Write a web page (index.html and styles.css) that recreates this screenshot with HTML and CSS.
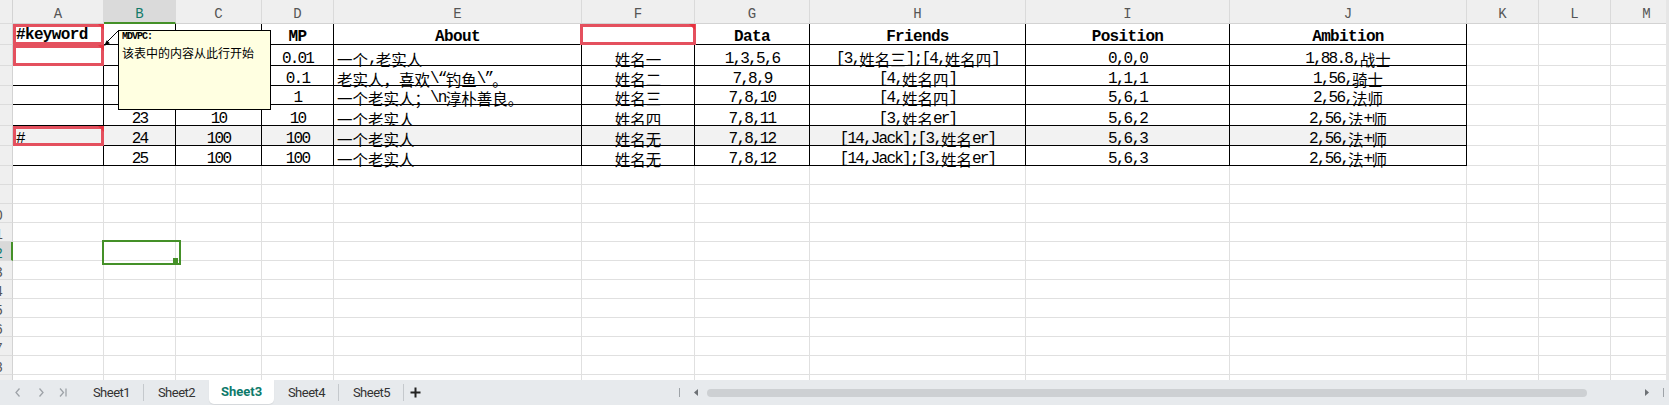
FILE: index.html
```html
<!DOCTYPE html>
<html lang="zh-CN">
<head>
<meta charset="utf-8">
<title>Sheet3</title>
<link rel="stylesheet" href="styles.css">
</head>
<body>
<div class="app">
  <div class="main">
    <div class="sheet">
      <div class="row hdr">
        <div class="rh"></div>
        <div class="ch">A</div><div class="ch sel">B</div><div class="ch">C</div><div class="ch">D</div><div class="ch">E</div><div class="ch">F</div><div class="ch">G</div><div class="ch">H</div><div class="ch">I</div><div class="ch">J</div><div class="ch">K</div><div class="ch">L</div><div class="ch">M</div>
      </div>

      <div class="row h21">
        <div class="rh"></div>
        <div class="c t b l hl cm kw">#keyword</div>
        <div class="c t b"></div>
        <div class="c t b"></div>
        <div class="c t b">MP</div>
        <div class="c t b">About</div>
        <div class="c t hl hlf cm"></div>
        <div class="c t b">Data</div>
        <div class="c t b">Friends</div>
        <div class="c t b">Position</div>
        <div class="c t b">Ambition</div>
        <div class="c"></div><div class="c"></div><div class="c"></div>
      </div>

      <div class="row h21">
        <div class="rh"></div>
        <div class="c t hl cm"></div>
        <div class="c t"></div>
        <div class="c t"></div>
        <div class="c t">0.01</div>
        <div class="c t l"><span class="z">一个</span>,<span class="z">老实人</span></div>
        <div class="c t"><span class="z">姓名一</span></div>
        <div class="c t">1,3,5,6</div>
        <div class="c t">[3,<span class="z">姓名三</span>];[4,<span class="z">姓名四</span>]</div>
        <div class="c t">0,0,0</div>
        <div class="c t">1,88.8,<span class="z">战士</span></div>
        <div class="c"></div><div class="c"></div><div class="c"></div>
      </div>

      <div class="row h20">
        <div class="rh"></div>
        <div class="c t"></div>
        <div class="c t"></div>
        <div class="c t"></div>
        <div class="c t">0.1</div>
        <div class="c t l"><span class="z">老实人，喜欢</span>\“<span class="z">钓鱼</span>\”<span class="z">。</span></div>
        <div class="c t"><span class="z">姓名二</span></div>
        <div class="c t">7,8,9</div>
        <div class="c t">[4,<span class="z">姓名四</span>]</div>
        <div class="c t">1,1,1</div>
        <div class="c t">1,56,<span class="z">骑士</span></div>
        <div class="c"></div><div class="c"></div><div class="c"></div>
      </div>

      <div class="row">
        <div class="rh"></div>
        <div class="c t"></div>
        <div class="c t"></div>
        <div class="c t"></div>
        <div class="c t">1</div>
        <div class="c t l"><span class="z">一个老实人；</span>\n<span class="z">淳朴善良。</span></div>
        <div class="c t"><span class="z">姓名三</span></div>
        <div class="c t">7,8,10</div>
        <div class="c t">[4,<span class="z">姓名四</span>]</div>
        <div class="c t">5,6,1</div>
        <div class="c t">2,56,<span class="z">法师</span></div>
        <div class="c"></div><div class="c"></div><div class="c"></div>
      </div>

      <div class="row h21">
        <div class="rh"></div>
        <div class="c t"></div>
        <div class="c t">23</div>
        <div class="c t">10</div>
        <div class="c t">10</div>
        <div class="c t l"><span class="z">一个老实人</span></div>
        <div class="c t"><span class="z">姓名四</span></div>
        <div class="c t">7,8,11</div>
        <div class="c t">[3,<span class="z">姓名</span>er]</div>
        <div class="c t">5,6,2</div>
        <div class="c t">2,56,<span class="z">法</span>+<span class="z">师</span></div>
        <div class="c"></div><div class="c"></div><div class="c"></div>
      </div>

      <div class="row h20">
        <div class="rh"></div>
        <div class="c t g l hl cm">#</div>
        <div class="c t g">24</div>
        <div class="c t g">100</div>
        <div class="c t g">100</div>
        <div class="c t g l"><span class="z">一个老实人</span></div>
        <div class="c t g"><span class="z">姓名无</span></div>
        <div class="c t g">7,8,12</div>
        <div class="c t g">[14,Jack];[3,<span class="z">姓名</span>er]</div>
        <div class="c t g">5,6,3</div>
        <div class="c t g">2,56,<span class="z">法</span>+<span class="z">师</span></div>
        <div class="c"></div><div class="c"></div><div class="c"></div>
      </div>

      <div class="row h20">
        <div class="rh"></div>
        <div class="c t"></div>
        <div class="c t">25</div>
        <div class="c t">100</div>
        <div class="c t">100</div>
        <div class="c t l"><span class="z">一个老实人</span></div>
        <div class="c t"><span class="z">姓名无</span></div>
        <div class="c t">7,8,12</div>
        <div class="c t">[14,Jack];[3,<span class="z">姓名</span>er]</div>
        <div class="c t">5,6,3</div>
        <div class="c t">2,56,<span class="z">法</span>+<span class="z">师</span></div>
        <div class="c"></div><div class="c"></div><div class="c"></div>
      </div>

      <div class="row"><div class="rh"></div><div class="c"></div><div class="c"></div><div class="c"></div><div class="c"></div><div class="c"></div><div class="c"></div><div class="c"></div><div class="c"></div><div class="c"></div><div class="c"></div><div class="c"></div><div class="c"></div><div class="c"></div></div>
      <div class="row"><div class="rh"></div><div class="c"></div><div class="c"></div><div class="c"></div><div class="c"></div><div class="c"></div><div class="c"></div><div class="c"></div><div class="c"></div><div class="c"></div><div class="c"></div><div class="c"></div><div class="c"></div><div class="c"></div></div>
      <div class="row"><div class="rh"><span>10</span></div><div class="c"></div><div class="c"></div><div class="c"></div><div class="c"></div><div class="c"></div><div class="c"></div><div class="c"></div><div class="c"></div><div class="c"></div><div class="c"></div><div class="c"></div><div class="c"></div><div class="c"></div></div>
      <div class="row"><div class="rh"><span>11</span></div><div class="c"></div><div class="c"></div><div class="c"></div><div class="c"></div><div class="c"></div><div class="c"></div><div class="c"></div><div class="c"></div><div class="c"></div><div class="c"></div><div class="c"></div><div class="c"></div><div class="c"></div></div>
      <div class="row"><div class="rh rsel"><span>12</span></div><div class="c"></div><div class="c sc"></div><div class="c"></div><div class="c"></div><div class="c"></div><div class="c"></div><div class="c"></div><div class="c"></div><div class="c"></div><div class="c"></div><div class="c"></div><div class="c"></div><div class="c"></div></div>
      <div class="row"><div class="rh"><span>13</span></div><div class="c"></div><div class="c"></div><div class="c"></div><div class="c"></div><div class="c"></div><div class="c"></div><div class="c"></div><div class="c"></div><div class="c"></div><div class="c"></div><div class="c"></div><div class="c"></div><div class="c"></div></div>
      <div class="row"><div class="rh"><span>14</span></div><div class="c"></div><div class="c"></div><div class="c"></div><div class="c"></div><div class="c"></div><div class="c"></div><div class="c"></div><div class="c"></div><div class="c"></div><div class="c"></div><div class="c"></div><div class="c"></div><div class="c"></div></div>
      <div class="row"><div class="rh"><span>15</span></div><div class="c"></div><div class="c"></div><div class="c"></div><div class="c"></div><div class="c"></div><div class="c"></div><div class="c"></div><div class="c"></div><div class="c"></div><div class="c"></div><div class="c"></div><div class="c"></div><div class="c"></div></div>
      <div class="row"><div class="rh"><span>16</span></div><div class="c"></div><div class="c"></div><div class="c"></div><div class="c"></div><div class="c"></div><div class="c"></div><div class="c"></div><div class="c"></div><div class="c"></div><div class="c"></div><div class="c"></div><div class="c"></div><div class="c"></div></div>
      <div class="row"><div class="rh"><span>17</span></div><div class="c"></div><div class="c"></div><div class="c"></div><div class="c"></div><div class="c"></div><div class="c"></div><div class="c"></div><div class="c"></div><div class="c"></div><div class="c"></div><div class="c"></div><div class="c"></div><div class="c"></div></div>
      <div class="row"><div class="rh"><span>18</span></div><div class="c"></div><div class="c"></div><div class="c"></div><div class="c"></div><div class="c"></div><div class="c"></div><div class="c"></div><div class="c"></div><div class="c"></div><div class="c"></div><div class="c"></div><div class="c"></div><div class="c"></div></div>
      <div class="row"><div class="rh"><span>19</span></div><div class="c"></div><div class="c"></div><div class="c"></div><div class="c"></div><div class="c"></div><div class="c"></div><div class="c"></div><div class="c"></div><div class="c"></div><div class="c"></div><div class="c"></div><div class="c"></div><div class="c"></div></div>

      <svg class="pointer" width="24" height="24" viewBox="0 0 24 24">
        <line x1="18.5" y1="4.5" x2="7" y2="16" stroke="#000" stroke-width="1"/>
        <polygon points="4,20 9.8,17.2 6.8,14.2" fill="#000"/>
      </svg>
      <div class="comment">
        <div class="ct">MDVPC:</div>
        <div class="cb">该表中的内容从此行开始</div>
      </div>
    </div>
    <div class="vscroll"></div>
  </div>

  <div class="tabbar">
    <div class="nav">
      <span class="nb"><svg width="9" height="9" viewBox="0 0 9 9"><path d="M1.5 0.5v8M7.5 0.5L4 4.5L7.5 8.5"/></svg></span>
      <span class="nb"><svg width="9" height="9" viewBox="0 0 9 9"><path d="M6.5 0.5L3 4.5L6.5 8.5"/></svg></span>
      <span class="nb"><svg width="9" height="9" viewBox="0 0 9 9"><path d="M2.5 0.5L6 4.5L2.5 8.5"/></svg></span>
      <span class="nb last"><svg width="9" height="9" viewBox="0 0 9 9"><path d="M1 0.5L4.5 4.5L1 8.5M7 0.5v8"/></svg></span>
    </div>
    <div class="tabs">
      <span class="tab s">Sheet1</span>
      <span class="tab">Sheet2</span>
      <span class="tab on">Sheet3</span>
      <span class="tab s">Sheet4</span>
      <span class="tab s">Sheet5</span>
      <span class="add"><svg width="11" height="11" viewBox="0 0 11 11"><path d="M5.5 0.5v10M0.5 5.5h10"/></svg></span>
    </div>
    <div class="hscroll">
      <i class="tick"></i>
      <svg class="arr al" width="4" height="7" viewBox="0 0 4 7"><path d="M4 0V7L0 3.5Z"/></svg>
      <i class="thumb"></i>
      <svg class="arr ar" width="4" height="7" viewBox="0 0 4 7"><path d="M0 0V7L4 3.5Z"/></svg>
      <i class="tick tr"></i>
    </div>
  </div>
</div>
</body>
</html>
```

FILE: styles.css
```css
* { box-sizing: border-box; }
html, body { margin: 0; padding: 0; }
body {
  width: 1669px;
  height: 405px;
  overflow: hidden;
  background: #fff;
  font-family: "Liberation Mono", "Noto Sans CJK SC", monospace;
  color: #000;
}
.app { display: flex; flex-direction: column; height: 405px; }
.main { display: flex; height: 380px; }
.sheet { position: relative; flex: 1; overflow: hidden; }
.vscroll { width: 3px; background: #e6e6e6; }

/* grid rows */
.row {
  display: grid;
  grid-template-columns: 13px 91px 72px 86px 72px 248px 113px 115px 216px 204px 237px 72px 72px 72px;
  height: 19px;
}
.row.hdr { height: 24px; }
.row.h21 { height: 21px; }
.row.h20 { height: 20px; }

.row > div {
  position: relative;
  display: flex;
  align-items: flex-end;
  justify-content: center;
  border-right: 1px solid #e0e0e0;
  border-bottom: 1px solid #e0e0e0;
  line-height: 12px;
  white-space: nowrap;
}

/* row headers (scrolled partly out of view) */
.row > .rh {
  background: #efefef;
  border-right-color: #d3d3d3;
  border-bottom-color: #dcdcdc;
  overflow: hidden;
  justify-content: flex-start;
  font-size: 14px;
  color: #555;
}
.rh span { display: block; flex: none; width: 35px; margin-left: -23px; text-align: center; }
.row > .rh.rsel {
  background: #d9d9d9;
  border-right: 2px solid #449028;
  color: #127a69;
}

/* column headers */
.row > .ch {
  background: #efefef;
  border-right-color: #dadada;
  border-bottom-color: #d3d3d3;
  font-size: 14px;
  color: #555;
  padding-bottom: 3px;
}
.row > .ch.sel {
  background: #dadada;
  border-bottom: 2px solid #449028;
  padding-bottom: 2px;
  color: #127a69;
}

/* cells */
.row > .c { font-size: 16px; letter-spacing: -1.8px; }
.z {
  font-family: "Noto Sans CJK SC", sans-serif;
  font-size: 15.5px;
  letter-spacing: 0;
  vertical-align: 2px;
}
.row > .t { border-right-color: #000; border-bottom-color: #000; }
.row > .b { font-weight: bold; letter-spacing: -0.65px; padding-bottom: 1px; }
.row > .kw { padding-bottom: 3px; }
.row > .l { justify-content: flex-start; padding-left: 3px; }
.row > .g { background: #f2f2f2; }

/* red highlight frames and comment markers */
.hl::before {
  content: "";
  position: absolute;
  left: 0; top: 0; right: -1px; bottom: -1px;
  border: 3px solid #e4505e;
  z-index: 1;
}
.hlf::before { left: -2px; right: -2px; }
.cm::after {
  content: "";
  position: absolute;
  top: 0; right: -1px;
  border-top: 6px solid #e8323f;
  border-left: 6px solid transparent;
  z-index: 2;
}

/* selected cell B12 */
.sc::before {
  content: "";
  position: absolute;
  left: -2px; top: -2px;
  width: 75px; height: 21px;
  border: 2px solid #449028;
  z-index: 2;
}
.sc::after {
  content: "";
  position: absolute;
  left: 69px; top: 16px;
  width: 5px; height: 5px;
  background: #449028;
  z-index: 3;
}

/* comment popup */
.comment {
  position: absolute;
  left: 118px; top: 30px;
  width: 153px; height: 80px;
  border: 1px solid #000;
  background: #ffffe1;
  padding: 0 3px;
  z-index: 5;
}
.ct {
  font-family: "Liberation Mono", monospace;
  font-weight: bold;
  font-size: 10px;
  line-height: 11px;
  letter-spacing: -1px;
}
.cb {
  margin-top: 3px;
  font-family: "Noto Sans CJK SC", sans-serif;
  font-size: 12px;
  line-height: 16px;
  white-space: nowrap;
}
.pointer {
  position: absolute;
  left: 100px; top: 26px;
  z-index: 6;
}

/* sheet tab bar */
.tabbar {
  display: flex;
  align-items: stretch;
  height: 25px;
  background: #e7eaed;
  font-family: Roboto, "Noto Sans", sans-serif;
}
.nav { display: flex; margin-left: -19px; }
.nb {
  width: 24px;
  display: flex;
  align-items: center;
  justify-content: center;
}
.nb svg { fill: none; stroke: #9ea3a8; stroke-width: 1.3; }
.nb.last svg { margin-right: 4px; }
.tabs { display: flex; margin-left: 2px; }
.tab {
  width: 65px;
  display: flex;
  align-items: center;
  justify-content: center;
  font-size: 13px;
  letter-spacing: -0.5px;
  color: #333;
  padding-bottom: 1px;
}
.tab.s {
  background: linear-gradient(#c5c9cd, #c5c9cd) right 4px / 1px 17px no-repeat;
}
.tab.on {
  background: #fff;
  border-radius: 0 0 5px 5px;
  height: 24px;
  font-weight: bold;
  letter-spacing: 0;
  color: #0d7a6b;
  box-shadow: 0 1px 1px rgba(0,0,0,0.08);
}
.add {
  width: 22px;
  display: flex;
  align-items: center;
  justify-content: center;
}
.add svg { fill: none; stroke: #222; stroke-width: 2; }

.hscroll {
  margin-left: auto;
  width: 990px;
  display: flex;
  align-items: center;
  padding-right: 5px;
}
.tick { display: block; width: 1px; height: 9px; background: #9ea3a8; flex: none; }
.arr { fill: #6d7175; flex: none; }
.al { margin-left: 14px; }
.thumb {
  display: block;
  flex: none;
  width: 880px;
  height: 8px;
  margin-left: 9px;
  border-radius: 4px;
  background: #cdd0d3;
}
.ar { margin-left: 58px; }
.tr { margin-left: 14px; }
```
